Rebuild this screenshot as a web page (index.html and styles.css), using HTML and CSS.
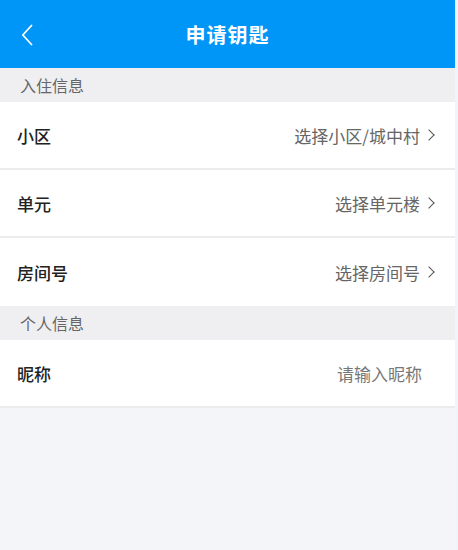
FILE: index.html
```html
<!DOCTYPE html>
<html lang="zh-CN">
<head>
  <meta charset="UTF-8">
  <meta name="viewport" content="width=device-width, initial-scale=1">
  <title>申请钥匙</title>
  <link rel="stylesheet" href="styles.css">
</head>
<body>
  <div class="page">
    <header class="topbar">
      <span class="back">
        <svg width="12" height="22" viewBox="0 0 12 22"><path d="M10.5 1.5 L1.8 11 L10.5 20.5" fill="none" stroke="#fff" stroke-width="1.8" stroke-linecap="round" stroke-linejoin="round"/></svg>
      </span>
      <h1>申请钥匙</h1>
    </header>

    <div class="section-title">入住信息</div>
    <div class="row">
      <span class="label">小区</span>
      <span class="value">选择小区/城中村<i class="arrow"></i></span>
    </div>
    <div class="row">
      <span class="label">单元</span>
      <span class="value">选择单元楼<i class="arrow"></i></span>
    </div>
    <div class="row last">
      <span class="label">房间号</span>
      <span class="value">选择房间号<i class="arrow"></i></span>
    </div>

    <div class="section-title">个人信息</div>
    <div class="row">
      <span class="label">昵称</span>
      <span class="value placeholder">请输入昵称</span>
    </div>
  </div>
</body>
</html>
```

FILE: styles.css
```css
* { box-sizing: border-box; }
html, body {
  margin: 0;
  height: 100%;
}
body {
  font-family: "Noto Sans CJK SC", "Noto Sans", sans-serif;
  background: #f1f4fa;
  color: #222;
}
.page {
  width: 455px;
  min-height: 100%;
  background: #f3f5f9;
}
.topbar {
  height: 68px;
  background: #0096f8;
  display: flex;
  align-items: center;
  justify-content: center;
  position: relative;
}
.topbar h1 {
  margin: 0;
  font-size: 20px;
  font-weight: 700;
  color: #fff;
  letter-spacing: 1px;
}
.back {
  position: absolute;
  left: 21px;
  top: 24px;
  display: flex;
}
.section-title {
  height: 34px;
  line-height: 34px;
  padding-left: 20px;
  font-size: 16px;
  color: #666;
  background: #efeff2;
}
.row {
  height: 68px;
  display: flex;
  align-items: center;
  justify-content: space-between;
  padding: 0 20px 0 17px;
  background: #fff;
  border-bottom: 2px solid #ececee;
}
.row.last {
  border-bottom: 0;
}
.label {
  font-size: 17px;
  font-weight: 500;
  color: #222;
}
.value {
  font-size: 17px;
  color: #666;
  display: flex;
  align-items: center;
}
.value.placeholder {
  padding-right: 13px;
  color: #777;
}
.arrow {
  width: 8px;
  height: 8px;
  border-top: 1.5px solid #555;
  border-right: 1.5px solid #555;
  transform: rotate(45deg);
  margin-left: 5px;
  margin-right: 2px;
}
```
